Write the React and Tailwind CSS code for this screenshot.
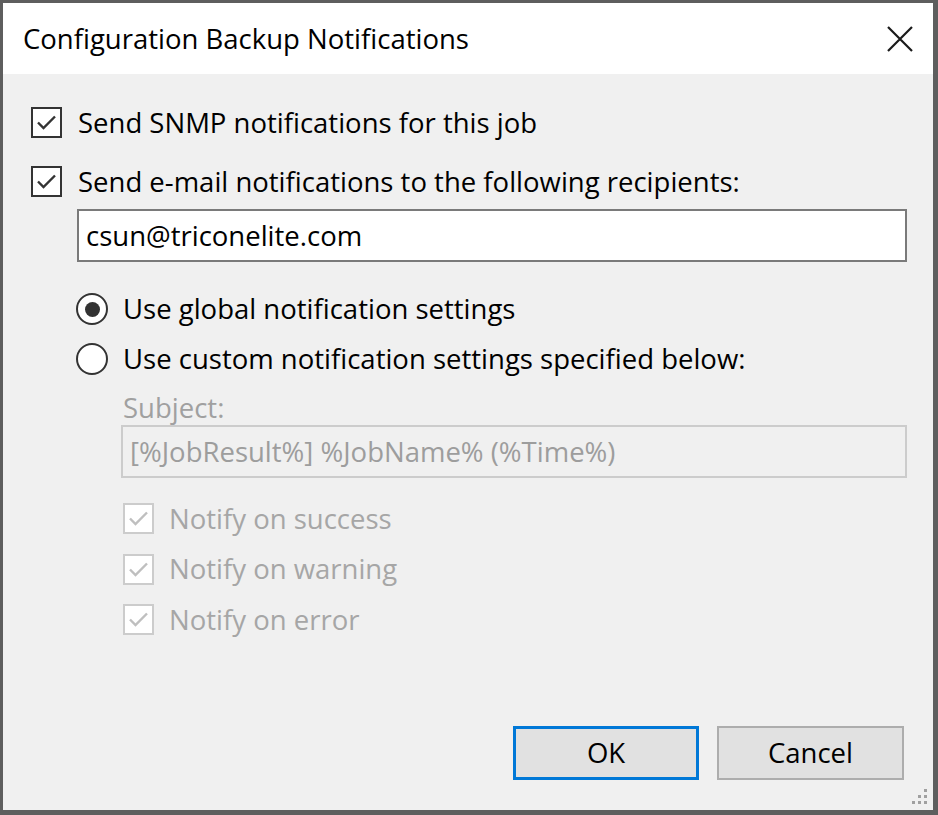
import React from "react";

const font = { fontFamily: '"Open Sans", "Noto Sans", sans-serif' };

function Check({ disabled }) {
  return (
    <div
      className={`w-[31px] h-[31px] shrink-0 border-2 bg-white flex items-center justify-center ${
        disabled ? "border-[#cccccc]" : "border-[#333333]"
      }`}
    >
      <svg width="25" height="25" viewBox="0 0 25 25">
        <polyline
          points="4,12.5 9.5,18 21,6.5"
          fill="none"
          stroke={disabled ? "#bfbfbf" : "#333333"}
          strokeWidth="2.4"
        />
      </svg>
    </div>
  );
}

function Radio({ checked }) {
  return (
    <div className="w-[32px] h-[32px] shrink-0 rounded-full border-2 border-[#333333] bg-white flex items-center justify-center">
      {checked && <div className="w-[15px] h-[15px] rounded-full bg-[#333333]" />}
    </div>
  );
}

export default function App() {
  return (
    <div
      className="w-[938px] h-[815px] bg-[#5e5e5e] pt-[3px] pl-[3px] pr-[5px] pb-[5px] flex flex-col overflow-hidden"
      style={font}
    >
      <div className="h-[71px] bg-white flex items-center justify-between pl-[20px] pr-[20px] shrink-0">
        <span className="text-[27.5px] text-black leading-none">Configuration Backup Notifications</span>
        <svg width="26" height="26" viewBox="0 0 26 26">
          <path d="M1 1 L25 25 M25 1 L1 25" stroke="#1a1a1a" strokeWidth="2.2" fill="none" />
        </svg>
      </div>
      <div className="flex-1 bg-[#f0f0f0] flex flex-col pt-[33px] pb-[30px] pl-[28px] pr-[26px] relative text-[27.5px] text-black">
        <div className="flex items-center h-[31px]">
          <Check />
          <span className="ml-[16px] leading-none">Send SNMP notifications for this job</span>
        </div>
        <div className="flex items-center h-[31px] mt-[28px]">
          <Check />
          <span className="ml-[16px] leading-none">Send e-mail notifications to the following recipients:</span>
        </div>
        <div className="ml-[46px] mt-[12px] h-[53px] border-2 border-[#7a7a7a] bg-white flex items-center pl-[7px]">
          <span className="leading-none">csun@triconelite.com</span>
        </div>
        <div className="ml-[45px] mt-[31px] flex items-center h-[32px]">
          <Radio checked />
          <span className="ml-[15px] leading-none">Use global notification settings</span>
        </div>
        <div className="ml-[45px] mt-[18px] flex items-center h-[32px]">
          <Radio />
          <span className="ml-[15px] leading-none">Use custom notification settings specified below:</span>
        </div>
        <div className="ml-[92px] mt-[18px] h-[30px] flex items-center text-[#a0a0a0]">
          <span className="leading-none">Subject:</span>
        </div>
        <div className="ml-[90px] mt-[2px] h-[53px] border-2 border-[#cccccc] bg-[#f0f0f0] flex items-center pl-[7px] text-[#9d9d9d]">
          <span className="leading-none">[%JobResult%] %JobName% (%Time%)</span>
        </div>
        <div className="ml-[92px] mt-[25px] flex flex-col gap-[19.5px] text-[#a6a6a6]">
          <div className="flex items-center h-[31px]">
            <Check disabled />
            <span className="ml-[15px] leading-none">Notify on success</span>
          </div>
          <div className="flex items-center h-[31px]">
            <Check disabled />
            <span className="ml-[15px] leading-none">Notify on warning</span>
          </div>
          <div className="flex items-center h-[31px]">
            <Check disabled />
            <span className="ml-[15px] leading-none">Notify on error</span>
          </div>
        </div>
        <div className="mt-auto flex justify-end gap-[18px] pr-[3px]">
          <button className="w-[186px] h-[54px] border-[3px] border-[#0078d7] bg-[#e1e1e1] flex items-center justify-center text-[27.5px] text-black leading-none">
            OK
          </button>
          <button className="w-[187px] h-[54px] border-2 border-[#adadad] bg-[#e1e1e1] flex items-center justify-center text-[27.5px] text-black leading-none">
            Cancel
          </button>
        </div>
        <svg className="absolute right-[3px] bottom-[3px]" width="20" height="20" viewBox="0 0 20 20">
          <g fill="#a0a0a0">
            <rect x="14" y="2" width="3" height="3" />
            <rect x="8" y="8" width="3" height="3" />
            <rect x="14" y="8" width="3" height="3" />
            <rect x="2" y="14" width="3" height="3" />
            <rect x="8" y="14" width="3" height="3" />
            <rect x="14" y="14" width="3" height="3" />
          </g>
        </svg>
      </div>
    </div>
  );
}
